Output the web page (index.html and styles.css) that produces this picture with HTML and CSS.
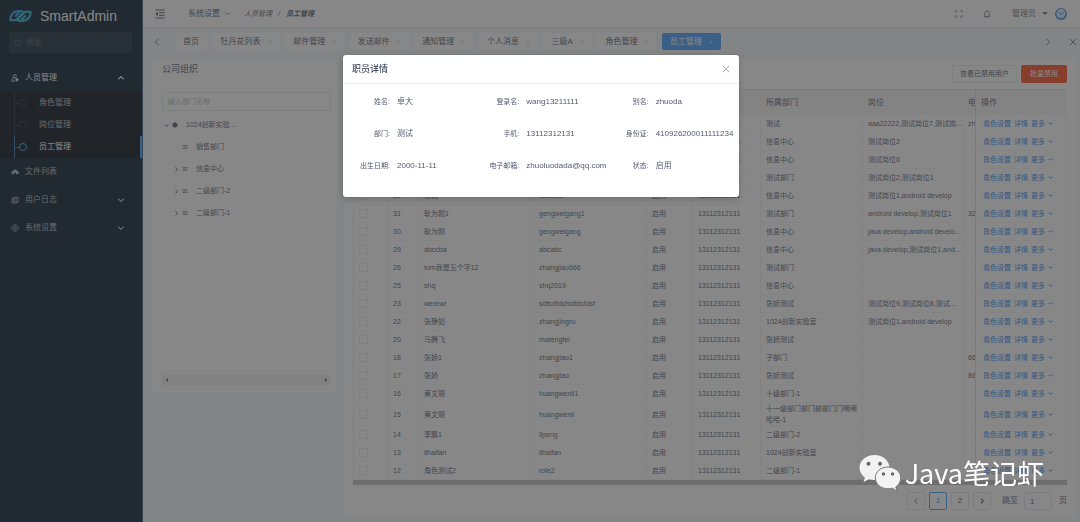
FILE: index.html
```html
<!DOCTYPE html>
<html lang="zh-CN">
<head>
<meta charset="utf-8">
<title>SmartAdmin</title>
<link rel="stylesheet" href="styles.css">
</head>
<body>
<svg class="sprite" aria-hidden="true">
  <symbol id="chevron" viewBox="0 0 10 10"><path d="M1.5 3.2 5 6.8 8.5 3.2"/></symbol>
  <symbol id="chevron-right" viewBox="0 0 10 10"><path d="M3.2 1 7 5 3.2 9"/></symbol>
  <symbol id="cross" viewBox="0 0 10 10"><path d="M1 1 9 9M9 1 1 9"/></symbol>
  <symbol id="lines" viewBox="0 0 10 10"><path d="M1 2.5H9M1 5H9M1 7.5H9"/></symbol>
</svg>

<div class="app">
  <aside class="sidebar">
    <div class="brand">
      <svg class="brand-logo" viewBox="0 0 44 26"><g fill="none" stroke-width="4.500" stroke-linecap="round" stroke-linejoin="round"><path stroke="#2a9fe8" d="M13 13 19 6.500M3 20C2 11 9 4 17 4h8M3 21h11L29 6"/><path stroke="#22b5c8" d="M31 13 25 19.500M41 6c1 9-6 16-14 16h-8M41 5H30L15 20"/></g></svg>
      <span>SmartAdmin</span>
    </div>
    <label class="side-search">
      <svg class="icon" viewBox="0 0 10 10"><circle cx="4.3" cy="4.3" r="3"/><path d="M6.5 6.5 9 9"/></svg>
      <input type="text" placeholder="搜索" aria-label="搜索">
    </label>
    <nav>
      <button class="menu-item open" type="button">
        <svg class="icon" viewBox="0 0 10 10"><circle cx="4.6" cy="2.8" r="2"/><path d="M5.5 9H1c0-3 1.500-4.200 3.600-4.200M7.500 5.500v3.500M5.700 7.200h3.600M6.500 6h2v2.500h-2z"/></svg>
        <span>人员管理</span>
        <svg class="icon arrow up"><use href="#chevron"/></svg>
      </button>
      <div class="submenu">
        <a href="#">角色管理</a>
        <a href="#">岗位管理</a>
        <a href="#" class="active">员工管理</a>
      </div>
      <button class="menu-item" type="button">
        <svg class="icon solid" viewBox="0 0 10 10"><path d="M2.500 7.800a2 2 0 0 1-.2-4A3 3 0 0 1 8 4.200a1.800 1.800 0 0 1 0 3.600H6V6H4v1.800z"/></svg>
        <span>文件列表</span>
      </button>
      <button class="menu-item" type="button">
        <svg class="icon" viewBox="0 0 10 10"><path d="M3 1.500h6v6H3zM3 3H1.500v5.800H7.500V7.500M4.500 3.500h3M4.500 5.200h3"/></svg>
        <span>用户日志</span>
        <svg class="icon arrow"><use href="#chevron"/></svg>
      </button>
      <button class="menu-item" type="button">
        <svg class="icon" viewBox="0 0 10 10"><path d="M3.500 1h3L9 3.500v3L6.500 9h-3L1 6.500v-3z"/><circle cx="5" cy="5" r="1.700"/></svg>
        <span>系统设置</span>
        <svg class="icon arrow"><use href="#chevron"/></svg>
      </button>
    </nav>
  </aside>

  <div class="main">
    <header class="topbar">
      <button class="plain" type="button" aria-label="收起菜单"><svg class="icon fold" viewBox="0 0 10 10"><path d="M.5 1h9M4 3.700h5.500M4 6.300h5.500M.5 9h9M2.500 3.500.8 5l1.700 1.500z"/></svg></button>
      <button class="plain system" type="button">系统设置<svg class="icon small"><use href="#chevron"/></svg></button>
      <div class="crumbs"><span>人员管理</span><span>/</span><b>员工管理</b></div>
      <div class="user-tools">
        <button class="plain" type="button" aria-label="全屏"><svg class="icon" viewBox="0 0 10 10"><path d="M1 3.500V1h2.500M6.500 1H9v2.500M9 6.500V9H6.500M3.500 9H1V6.500"/></svg></button>
        <button class="plain bell" type="button" aria-label="通知"><svg class="icon" viewBox="0 0 10 10"><path d="M1 8h8M2 8V4.500a3 3 0 0 1 6 0V8M4 9.500h2M5 .5v1"/></svg></button>
        <button class="plain user" type="button">管理员<i class="caret"></i></button>
        <svg class="avatar" viewBox="0 0 12 12"><circle cx="6" cy="6" r="6" fill="#3d8fe0"/><circle cx="6" cy="5.600" r="4.500" fill="#dcecff"/><path d="M3.500 4 6 6.800l2.500-2.800" fill="none" stroke="#3d8fe0"/></svg>
      </div>
    </header>

    <div class="tabbar">
      <button class="plain" type="button" aria-label="向左"><svg class="icon flip"><use href="#chevron-right"/></svg></button>
      <div class="tabs">
        <button class="tab" type="button">首页</button>
        <button class="tab" type="button">牡丹花列表<svg class="icon"><use href="#cross"/></svg></button>
        <button class="tab" type="button">邮件管理<svg class="icon"><use href="#cross"/></svg></button>
        <button class="tab" type="button">发送邮件<svg class="icon"><use href="#cross"/></svg></button>
        <button class="tab" type="button">通知管理<svg class="icon"><use href="#cross"/></svg></button>
        <button class="tab" type="button">个人消息<svg class="icon"><use href="#cross"/></svg></button>
        <button class="tab" type="button">三级A<svg class="icon"><use href="#cross"/></svg></button>
        <button class="tab" type="button">角色管理<svg class="icon"><use href="#cross"/></svg></button>
        <button class="tab current" type="button">员工管理<svg class="icon"><use href="#cross"/></svg></button>
      </div>
      <div class="tab-tools">
        <button class="plain" type="button" aria-label="向右"><svg class="icon"><use href="#chevron-right"/></svg></button>
        <button class="plain" type="button" aria-label="关闭"><svg class="icon"><use href="#cross"/></svg></button>
      </div>
    </div>

    <div class="content">
      <section class="card org">
        <h2>公司组织</h2>
        <input class="field" type="text" placeholder="输入部门名称" aria-label="输入部门名称">
        <ul class="tree">
          <li class="root"><svg class="icon tiny"><use href="#chevron"/></svg><svg class="icon solid" viewBox="0 0 10 10"><path d="M5 .5 9.300 2.800v4.400L5 9.500.7 7.200V2.800z"/></svg><span>1024创新实验...</span></li>
          <li><i class="tiny"></i><svg class="icon"><use href="#lines"/></svg><span>销售部门</span></li>
          <li><svg class="icon tiny"><use href="#chevron-right"/></svg><svg class="icon"><use href="#lines"/></svg><span>信息中心</span></li>
          <li><svg class="icon tiny"><use href="#chevron-right"/></svg><svg class="icon"><use href="#lines"/></svg><span>二级部门-2</span></li>
          <li><svg class="icon tiny"><use href="#chevron-right"/></svg><svg class="icon"><use href="#lines"/></svg><span>二级部门-1</span></li>
        </ul>
        <div class="hscroll"><i class="tri left"></i><i class="tri"></i></div>
      </section>

      <section class="card staff">
        <div class="actions">
          <button class="btn" type="button">查看已禁用用户</button>
          <button class="btn danger" type="button">批量禁用</button>
        </div>
        <table class="grid">
          <colgroup>
            <col class="w-check"><col class="w-id"><col class="w-name"><col><col class="w-status"><col class="w-phone"><col class="w-dept"><col class="w-post"><col class="w-mail"><col class="w-ops">
          </colgroup>
          <thead>
            <tr><th><input type="checkbox" aria-label="全选"></th><th>ID</th><th>姓名</th><th>登录名</th><th>状态</th><th>手机号</th><th>所属部门</th><th>岗位</th><th class="mail">电</th><th class="ops">操作</th></tr>
          </thead>
          <tbody id="rows"></tbody>
        </table>
        <div class="table-scroll"></div>
        <div class="pager">
          <button type="button" class="off" aria-label="上一页"><svg class="icon flip"><use href="#chevron-right"/></svg></button>
          <button type="button" class="on">1</button>
          <button type="button">2</button>
          <button type="button" aria-label="下一页"><svg class="icon"><use href="#chevron-right"/></svg></button>
          <label for="jump">跳至</label>
          <input id="jump" type="text" value="1">
          <span>页</span>
        </div>
      </section>
    </div>
  </div>
</div>

<div class="mask">
  <div class="dialog" role="dialog" aria-modal="true" aria-labelledby="dialog-title">
    <div class="dialog-head">
      <h1 id="dialog-title">职员详情</h1>
      <button class="plain" type="button" aria-label="关闭"><svg class="icon"><use href="#cross"/></svg></button>
    </div>
    <dl class="detail">
      <div><dt>姓名:</dt><dd>卓大</dd></div>
      <div><dt>登录名:</dt><dd>wang13211111</dd></div>
      <div><dt>别名:</dt><dd>zhuoda</dd></div>
      <div><dt>部门:</dt><dd>测试</dd></div>
      <div><dt>手机:</dt><dd>13112312131</dd></div>
      <div><dt>身份证:</dt><dd>410926200011111234</dd></div>
      <div><dt>出生日期:</dt><dd>2000-11-11</dd></div>
      <div><dt>电子邮箱:</dt><dd>zhuoluodada@qq.com</dd></div>
      <div><dt>状态:</dt><dd>启用</dd></div>
    </dl>
  </div>
</div>

<div class="watermark">
  <svg viewBox="0 0 42 37"><g fill="#f2f2f2"><path d="M15.500 0C7 0 .5 5.700.5 12.800c0 4 2.100 7.400 5.400 9.800L4.600 27l5.200-2.700c1.800.5 3.700.8 5.700.8 8.500 0 15-5.500 15-12.300S24 0 15.500 0z"/><path stroke="#777" d="M29 12c-7.200 0-12.700 4.800-12.700 10.900S21.800 33.800 29 33.800c1.500 0 3-.2 4.300-.6L38 36l-1.200-4c3-2.100 5-5.300 5-9.100C41.800 16.800 36.200 12 29 12z"/></g><g fill="#666"><circle cx="9.500" cy="8.700" r="2"/><circle cx="21" cy="8.700" r="2"/><circle cx="24.500" cy="19" r="1.700"/><circle cx="33.500" cy="19" r="1.700"/></g></svg>
  <span>Java笔记虾</span>
</div>
<script src="script.js"></script>
</body>
</html>
```

FILE: styles.css
```css
* { box-sizing: border-box; }

body {
  margin: 0;
  height: 100vh;
  overflow: hidden;
  font: 8px/12px "Liberation Sans", "Noto Sans CJK SC", sans-serif;
  color: #515a6e;
}

button, input { font: inherit; color: inherit; }
button { cursor: pointer; }
h1, h2, dl, dd, ul { margin: 0; padding: 0; }
a { text-decoration: none; color: inherit; }

.sprite { display: none; }
.icon {
  width: 8px;
  height: 8px;
  flex: none;
  fill: none;
  stroke: currentColor;
  stroke-width: 1;
}
.icon.solid { fill: currentColor; stroke: none; }
.flip { transform: scaleX(-1); }
.plain {
  display: flex;
  align-items: center;
  padding: 0;
  border: 0;
  background: none;
}

.app { display: flex; height: 100%; }

/* Sidebar */
.sidebar {
  flex: none;
  width: 143px;
  background: #001529;
  border-right: 1px solid #34597c;
  color: #b4bac2;
}
.brand {
  display: flex;
  align-items: center;
  gap: 8px;
  height: 32px;
  padding: 0 9px;
  font-size: 14px;
  color: #fff;
}
.brand-logo { width: 23px; height: 14px; }
.side-search {
  display: flex;
  align-items: center;
  gap: 4px;
  height: 21px;
  margin: 0 10px 11px 9px;
  padding: 0 5px;
  background: #15293b;
  border-radius: 2px;
  color: #46535f;
}
.side-search input {
  width: 100%;
  padding: 0;
  border: 0;
  background: none;
}
.side-search input::placeholder { color: #46535f; }
.menu-item {
  display: flex;
  align-items: center;
  gap: 6px;
  width: 100%;
  height: 28px;
  padding: 0 17px 0 11px;
  border: 0;
  background: none;
  text-align: left;
}
.menu-item.open { color: #fff; }
.arrow { margin-left: auto; stroke-width: 1.5; }
.arrow.up { transform: scaleY(-1); }
.submenu { background: #000c17; }
.submenu a {
  display: grid;
  grid-template-columns: 5px 6px 1fr;
  align-items: center;
  height: 22px;
  padding-left: 14px;
  text-indent: 14px;
}
.submenu a::before {
  content: "";
  grid-area: 1 / 1;
  height: 22px;
  border-left: 1px solid #1c2a38;
  background: linear-gradient(#1c2a38, #1c2a38) center / 100% 1px no-repeat;
}
.submenu a::after {
  content: "";
  grid-area: 1 / 2;
  width: 6px;
  height: 6px;
  border: 1px solid #1c2a38;
  border-radius: 50%;
}
.submenu .active {
  color: #fff;
  border-right: 2px solid #409eff;
}
.submenu .active::before {
  border-color: #2d6fb4;
  background-image: linear-gradient(#2d6fb4, #2d6fb4);
}
.submenu .active::after { border-color: #409eff; }

/* Top bar */
.main {
  flex: 1;
  min-width: 0;
  display: flex;
  flex-direction: column;
  background: #f5f7f9;
}
.topbar {
  display: flex;
  align-items: center;
  height: 27px;
  padding: 0 13px 0 12px;
  background: #fff;
}
.fold { width: 10px; height: 10px; }
.system { margin-left: 23px; gap: 4px; }
.small { width: 7px; height: 7px; }
.crumbs {
  display: flex;
  gap: 6px;
  margin-left: 13px;
  font-size: 7px;
  font-style: italic;
}
.user-tools {
  display: flex;
  align-items: center;
  margin-left: auto;
  color: #6b7385;
}
.bell { margin-left: 20px; }
.user { margin: 0 7px 0 21px; gap: 6px; }
.caret {
  border: 3px solid transparent;
  border-top-color: currentColor;
  border-bottom: 0;
}
.avatar { width: 12px; height: 12px; }

.tabbar {
  display: flex;
  align-items: center;
  height: 28px;
  padding: 0 3px 0 10px;
  border-top: 1px solid #e8eaee;
}
.tabs {
  flex: 0 1 546px;
  display: flex;
  justify-content: space-between;
  margin-left: 14px;
}
.tab {
  display: flex;
  align-items: center;
  gap: 7px;
  height: 17px;
  padding: 0 8px;
  border: 0;
  border-radius: 2px;
  background: #fff;
}
.tab .icon { width: 4px; height: 4px; stroke: #b0b5be; }
.tab.current { background: #409eff; color: #fff; }
.tab.current .icon { stroke: #fff; }
.tab-tools { display: flex; gap: 17px; margin-left: auto; }

/* Content */
.content {
  flex: 1;
  min-height: 0;
  display: flex;
  align-items: flex-start;
  gap: 7px;
  padding: 4px 4px 4px 10px;
}
.card { background: #fff; border-radius: 2px; }
.org {
  flex: none;
  width: 184px;
  padding: 4px 6px 8px 9px;
}
.org h2 { font-size: 9px; line-height: 12px; font-weight: 400; }
.field {
  width: 100%;
  height: 19px;
  margin-top: 17px;
  padding: 0 5px;
  border: 1px solid #e8eaec;
  border-radius: 2px;
  font-size: 7px;
}
.field::placeholder { color: #b4b8c0; }
.tree {
  height: 264px;
  padding-top: 3px;
  list-style: none;
  font-size: 7px;
}
.tree li {
  display: flex;
  align-items: center;
  height: 22px;
  padding-left: 12px;
}
.tree .root { padding-left: 2px; }
.tree .icon { width: 6px; height: 6px; }
.tree .tiny { width: 5px; height: 5px; margin-right: 3px; stroke-width: 2; }
.tree span { margin-left: 8px; }
.hscroll {
  display: flex;
  justify-content: space-between;
  align-items: center;
  height: 10px;
  padding: 0 4px;
  background: #f1f1f1;
}
.tri { border: 2px solid transparent; border-left-color: #505050; border-right: 0; }
.tri.left { border-right: 2px solid #505050; border-left: 0; }

.staff {
  flex: 1;
  min-width: 0;
  padding: 6px 9px 8px;
}
.actions {
  display: flex;
  justify-content: flex-end;
  gap: 4px;
  margin-bottom: 6px;
}
.btn {
  height: 18px;
  padding: 0 7px;
  border: 1px solid #e8eaec;
  border-radius: 2px;
  background: #fff;
  font-size: 7px;
}
.btn.danger {
  padding: 0 8px;
  background: #ff4a1c;
  border-color: #ff4a1c;
  color: #fff;
}

.grid {
  width: 100%;
  table-layout: fixed;
  border-spacing: 0;
  border-left: 1px solid #eceef2;
  border-top: 1px solid #e4e6ea;
  font-size: 7px;
  line-height: 11px;
}
.w-check { width: 34px; }
.w-id { width: 31px; }
.w-name { width: 115px; }
.w-status { width: 46px; }
.w-phone { width: 68px; }
.w-dept { width: 102px; }
.w-post { width: 102px; }
.w-mail { width: 11px; }
.w-ops { width: 91px; }
.grid th, .grid td {
  height: 18px;
  padding: 0 5px;
  border-right: 1px solid #f4f5f7;
  border-bottom: 1px solid #f8f8fa;
  text-align: left;
}
.grid th {
  height: 25px;
  background: #f4f5f7;
  font-size: 8px;
  font-weight: 400;
}
.grid .mail {
  padding: 0 0 0 3px;
  overflow: hidden;
  white-space: nowrap;
  border-right-color: #dcdee2;
}
.grid .ops { white-space: nowrap; }
.grid .post { white-space: nowrap; padding-right: 0; }
.grid td.ops { padding-left: 7px; color: #2d8cf0; }
.ops-list { display: flex; align-items: center; gap: 3px; }
.ops-list .icon { width: 5px; height: 5px; stroke-width: 2; }
.grid input {
  display: block;
  appearance: none;
  width: 9px;
  height: 9px;
  margin: 0;
  border: 1px solid #e8eaec;
  border-radius: 1px;
  background: #fff;
}
.table-scroll { height: 5px; background: #c1c1c1; }

.pager {
  display: flex;
  align-items: center;
  justify-content: flex-end;
  gap: 4px;
  margin-top: 7px;
}
.pager button, .pager input {
  width: 18px;
  height: 18px;
  padding: 0;
  border: 1px solid #e4e6ea;
  border-radius: 2px;
  background: #fff;
}
.pager button { display: grid; place-items: center; }
.pager .icon { width: 6px; height: 6px; stroke-width: 2; }
.pager .off { color: #a0a6b2; }
.pager button.on { border-color: #409eff; color: #409eff; }
.pager label { margin-left: 7px; }
.pager input { width: 28px; margin-left: 2px; padding: 0 5px; }
.pager span { margin-left: 3px; }

/* Dialog */
.mask {
  position: fixed;
  inset: 0;
  display: flex;
  justify-content: center;
  align-items: flex-start;
  padding: 55px 0 0 2px;
  background: rgba(55, 55, 55, 0.6);
}
.dialog {
  width: 396px;
  padding-bottom: 15px;
  background: #fff;
  border-radius: 3px;
  box-shadow: 0 2px 6px rgba(0, 0, 0, 0.2);
}
.dialog-head {
  display: flex;
  align-items: center;
  justify-content: space-between;
  height: 29px;
  padding: 0 9px;
  border-bottom: 1px solid #e8eaec;
}
.dialog-head h1 { font-size: 9px; font-weight: 400; color: #17233d; }
.dialog-head .plain { color: #999; }
.detail {
  display: grid;
  grid-template-columns: repeat(3, 1fr);
  padding: 2px 0 0 8px;
}
.detail div { display: flex; align-items: center; height: 32px; }
.detail dt {
  width: 39px;
  margin-right: 7px;
  font-size: 7px;
  text-align: right;
}

.watermark {
  position: fixed;
  right: 36px;
  bottom: 29px;
  display: flex;
  align-items: center;
  gap: 4px;
  font: 27px/40px "Noto Sans CJK SC", sans-serif;
  color: #fff;
}
.watermark svg { width: 42px; height: 37px; }
```

FILE: script.js
```js
const phone = "13112312131";
const staff = [
  [38, "卓大", "wang13211111", "测试", "aaa22222,测试岗位7,测试岗...", "zh"],
  [36, "测试", "ceshi36", "信息中心", "测试岗位2", ""],
  [35, "测试", "ceshi35", "信息中心", "测试岗位6", ""],
  [34, "测试", "ceshi34", "测试部门", "测试岗位2,测试岗位1", ""],
  [32, "测试", "ceshi32", "信息中心", "测试岗位1,android develop", ""],
  [31, "耿为刚1", "gengweigang1", "测试部门", "android develop,测试岗位1", "32"],
  [30, "耿为刚", "gengweigang", "信息中心", "java develop,android develo...", ""],
  [29, "abccba", "abcabc", "信息中心", "java develop,测试岗位1,and...", ""],
  [26, "tom我是五个字12", "zhangjiao666", "测试部门", "", ""],
  [25, "shq", "shq2019", "信息中心", "", ""],
  [23, "werewr", "sdfsdfdsfsdfdsfdsf", "张娇测试", "测试岗位9,测试岗位8,测试...", ""],
  [22, "张静如", "zhangjingru", "1024创新实验室", "测试岗位1,android develop", ""],
  [20, "马腾飞", "matengfei", "张娇测试", "", ""],
  [18, "张娇1", "zhangjiao1", "子部门", "", "66"],
  [17, "张娇", "zhangjiao", "张娇测试", "", "86"],
  [16, "黄文丽", "huangwenli1", "十级部门-1", "", ""],
  [15, "黄文丽", "huangwenli", "十一级部门部门部部门门嘀嘀哈哈-1", "", ""],
  [14, "李鹏1", "lipeng", "二级部门-2", "", ""],
  [13, "lihaifan", "lihaifan", "1024创新实验室", "", ""],
  [12, "角色测试2", "role2", "二级部门-1", "", ""]
];

document.getElementById("rows").innerHTML = staff.map(([id, name, login, dept, post, mail]) => `
  <tr>
    <td><input type="checkbox" aria-label="选择 ${name}"></td>
    <td>${id}</td><td>${name}</td><td>${login}</td><td>启用</td><td>${phone}</td>
    <td>${dept}</td><td class="post">${post}</td><td class="mail">${mail}</td>
    <td class="ops"><div class="ops-list"><a href="#">角色设置</a><a href="#">详情</a><a href="#">更多</a><svg class="icon"><use href="#chevron"/></svg></div></td>
  </tr>`).join("");
```
